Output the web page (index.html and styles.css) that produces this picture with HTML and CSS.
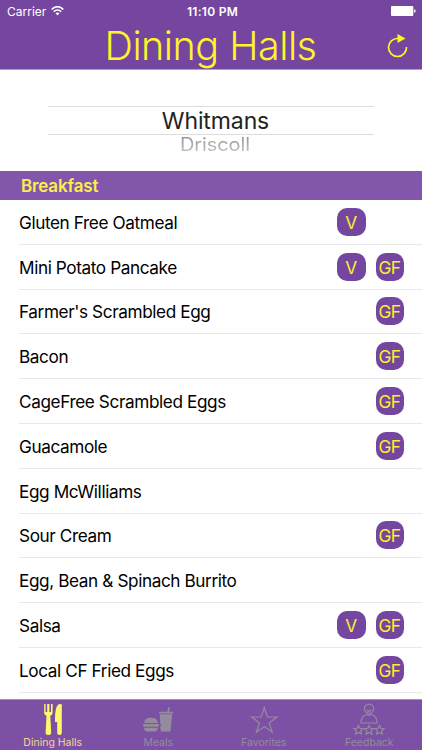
FILE: index.html
```html
<!DOCTYPE html>
<html lang="en">
<head>
<meta charset="utf-8">
<meta name="viewport" content="width=device-width, initial-scale=1">
<title>Dining Halls</title>
<link rel="stylesheet" href="styles.css">
</head>
<body>
<header>
	<div class="status">
		<div class="carrier">
			<span>Carrier</span>
			<svg width="13" height="10" viewBox="0 0 13 10" fill="none" stroke="#fff" stroke-width="1.6">
				<path d="M.7 3.6C4-.3 9-.3 12.3 3.6M2.8 5.7c2.1-2.3 5.3-2.3 7.4 0"/>
				<path d="M4.5 7.3c1.2-1.2 2.8-1.2 4 0l-2 2.2z" fill="#fff" stroke="none"/>
			</svg>
		</div>
		<span class="time">11:10 PM</span>
		<svg class="battery" width="25" height="10" viewBox="0 0 25 10" fill="#fff">
			<rect width="22.3" height="10" rx="1"/>
			<path d="M23.2 3.2q1.5.3 1.5 1.8t-1.5 1.8z"/>
		</svg>
	</div>
	<div class="title-bar">
		<h1>Dining Halls</h1>
		<svg class="refresh" width="22" height="24" viewBox="0 0 22 24">
			<path d="M11 4.500A9 9 0 1 0 19.500 13" fill="none" stroke="#fff32a" stroke-width="1.7"/>
			<path d="M10.500 0 18.500 4.500l-8 4.500z" fill="#fff32a"/>
		</svg>
	</div>
</header>
<div class="picker">
	<div class="selected">Whitmans</div>
	<div class="next">Driscoll</div>
</div>
<h2>Breakfast</h2>
<ul class="menu">
	<li><span class="dish">Gluten Free Oatmeal</span><span class="tag">V</span><span class="no-tag"></span></li>
	<li><span class="dish">Mini Potato Pancake</span><span class="tag">V</span><span class="tag">GF</span></li>
	<li><span class="dish">Farmer's Scrambled Egg</span><span class="tag">GF</span></li>
	<li><span class="dish">Bacon</span><span class="tag">GF</span></li>
	<li><span class="dish">CageFree Scrambled Eggs</span><span class="tag">GF</span></li>
	<li><span class="dish">Guacamole</span><span class="tag">GF</span></li>
	<li><span class="dish">Egg McWilliams</span></li>
	<li><span class="dish">Sour Cream</span><span class="tag">GF</span></li>
	<li><span class="dish">Egg, Bean &amp; Spinach Burrito</span></li>
	<li><span class="dish">Salsa</span><span class="tag">V</span><span class="tag">GF</span></li>
	<li><span class="dish">Local CF Fried Eggs</span><span class="tag">GF</span></li>
</ul>
<nav>
	<a class="tab active">
		<svg width="40" height="34" viewBox="0 0 40 34" fill="currentColor">
			<path d="M11.200 1h1.400v8h1.600V1h2.200v8H18V1h1.600v9q0 2-2.300 2.800l.9 17q0 2.200-2.800 2.200t-2.800-2.200l.9-17q-2.300-.8-2.300-2.800z"/>
			<path d="M28.800 1.500V29.800q0 2.200-2.300 2.200t-2.300-2.200V19h-2.200Q21.700 1 27 1q1.800 0 1.800.5z"/>
		</svg>
		<span>Dining Halls</span>
	</a>
	<a class="tab">
		<svg width="40" height="34" viewBox="0 0 40 34" fill="currentColor">
			<path d="M6 20q.5-5.300 7-5.300t7 5.300zM6 24.800h14q0 3.700-3.500 3.700h-7q-3.500 0-3.500-3.700z"/>
			<rect x="5" y="21" width="16" height="2.800" rx="1.400"/>
			<path d="M21 10.500V8.800h8.300l1-4.800 1.500.4-.8 4.400h4v1.700zM21.800 11.200h12.400L32.500 28.500h-9.300l-1.200-4q1.500-2 .3-4z"/>
		</svg>
		<span>Meals</span>
	</a>
	<a class="tab">
		<svg width="40" height="34" viewBox="0 0 40 34" fill="none" stroke="currentColor" stroke-width="1.200">
			<path d="M20.300 4.700 23.400 14H33L25.200 19.900 28.200 29.200 20.300 23.500 12.400 29.200 15.400 19.900 7.600 14h9.600z"/>
		</svg>
		<span>Favorites</span>
	</a>
	<a class="tab">
		<svg width="40" height="34" viewBox="0 0 40 34" fill="none" stroke="currentColor" stroke-width="1.200">
			<circle cx="20" cy="5.800" r="4.600"/>
			<path d="M17.500 7q2.500 2.500 5 0"/>
			<path d="M12 20q0-7.500 6-8.500l2 1 2-1q6 1 6 8.500z"/>
			<path id="star" d="M9.500 22.500l1.300 2.800 3.200.4-2.400 2 .7 3.300-2.800-1.600L6.700 31l.7-3.300-2.400-2 3.200-.4z"/>
			<use href="#star" x="10.500"/>
			<use href="#star" x="21"/>
		</svg>
		<span>Feedback</span>
	</a>
</nav>
</body>
</html>
```
FILE: styles.css
```css
body {
	margin: 0;
	height: 750px;
	overflow: hidden;
	display: flex;
	flex-direction: column;
	background: #fff;
	font-family: Inter, "Liberation Sans", sans-serif;
}
header {
	box-sizing: border-box;
	height: 70px;
	flex: none;
	background: #75469f;
	border-bottom: 1px solid #b79bcf;
}
.status {
	display: grid;
	grid-template-columns: 1fr auto 1fr;
	align-items: center;
	height: 22px;
	padding: 0 6px 0 7px;
	color: #fff;
	font-size: 12px;
}
.carrier {
	display: flex;
	align-items: center;
	gap: 5px;
}
.time {
	padding-left: 2px;
	font-weight: 600;
	letter-spacing: .3px;
}
.battery { justify-self: end; }
.title-bar {
	display: grid;
	grid-template-columns: 1fr auto 1fr;
	align-items: center;
	height: 47px;
	padding: 0 13px;
}
h1 {
	grid-column: 2;
	margin: 0;
	padding-right: 1px;
	color: #fff32a;
	font-size: 39.5px;
	font-weight: 350;
	letter-spacing: -.5px;
	line-height: 48px;
}
.refresh {
	justify-self: end;
	margin-bottom: 1px;
}
.picker {
	flex: none;
	height: 101px;
	padding: 36px 48px 0;
	box-sizing: border-box;
	text-align: center;
}
.selected {
	height: 27px;
	padding-left: 9px;
	line-height: 28px;
	border-top: 1px solid #ddd;
	border-bottom: 1px solid #ddd;
	color: #222;
	font-size: 23px;
	letter-spacing: -.1px;
}
.next {
	padding-left: 8px;
	font-size: 20px;
	line-height: 23px;
	letter-spacing: -.1px;
	transform: scaleY(.9);
	transform-origin: top;
	background: linear-gradient(#909090, #ccc);
	-webkit-background-clip: text;
	background-clip: text;
	color: transparent;
}
h2 {
	flex: none;
	box-sizing: border-box;
	height: 29px;
	margin: 0;
	padding-left: 21px;
	background: #8257ab;
	color: #fdee4b;
	font-size: 17px;
	font-weight: 600;
	letter-spacing: -.15px;
	line-height: 31px;
}
.menu {
	flex: 1;
	min-height: 0;
	overflow: hidden;
	margin: 0;
	padding: 0 0 0 19px;
	list-style: none;
}
.menu li {
	display: flex;
	align-items: center;
	gap: 10px;
	box-sizing: border-box;
	height: 44.8px;
	padding-right: 18px;
	border-bottom: 1px solid #e8e7ea;
}
.dish {
	flex: 1;
	padding-top: 1px;
	color: #000;
	font-size: 17.2px;
	letter-spacing: -.4px;
}
.tag, .no-tag {
	width: 28.5px;
	height: 28px;
}
.tag {
	border-radius: 10px;
	background: #75469f;
	color: #fdee30;
	font-size: 17.3px;
	letter-spacing: -.5px;
	line-height: 29px;
	text-align: center;
	text-indent: -.5px;
}
nav {
	flex: none;
	display: flex;
	box-sizing: border-box;
	height: 51px;
	border-top: 1px solid #a58fba;
	background: #7b50a5;
}
.tab {
	flex: 1;
	display: flex;
	flex-direction: column;
	align-items: center;
	padding-top: 3px;
	color: #958b9e;
	font-size: 10.5px;
	line-height: 12px;
}
.active { color: #fff76a; }
.active span { color: #f2d797; }
```
